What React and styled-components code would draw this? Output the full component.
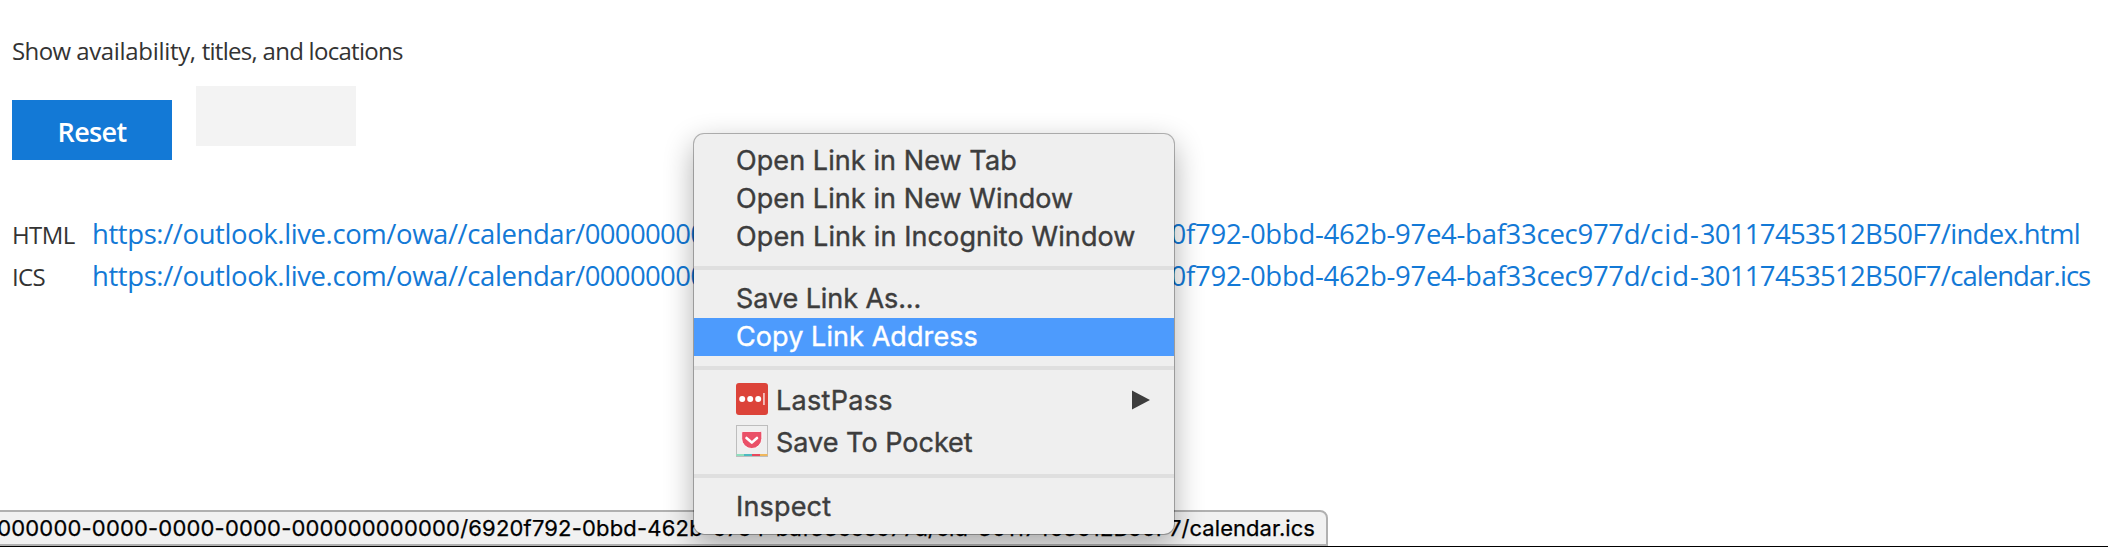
import React from 'react';
import styled, { createGlobalStyle } from 'styled-components';

const GlobalStyle = createGlobalStyle`
  body { margin: 0; background: #fff; overflow: hidden; }
  *, *::before, *::after { box-sizing: border-box; }
`;

const Page = styled.main`
  position: relative;
  width: 2108px;
  height: 547px;
  overflow: hidden;
  padding: 33px 0 0 12px;
  background: #fff;
  border-bottom: 1px solid #000;
  color: #333;
  font-family: 'Open Sans', 'Noto Sans', sans-serif;
`;

const Permission = styled.p`
  margin: 0;
  font-size: 24px;
  line-height: 36px;
  letter-spacing: -0.6px;
`;

const Actions = styled.div`
  display: flex;
  align-items: flex-start;
  gap: 24px;
  margin-top: 17px;
`;

const ResetButton = styled.button`
  width: 160px;
  height: 60px;
  margin: 14px 0 0;
  padding: 3px 0 0;
  border: 0;
  background: #1379d6;
  color: #fff;
  font: 600 27px 'Open Sans', sans-serif;
  letter-spacing: -0.65px;
`;

const EmptyButton = styled.div`
  width: 160px;
  height: 60px;
  background: #f3f3f3;
`;

const Links = styled.div`
  margin-top: 53px;
`;

const LinkRow = styled.div`
  display: flex;
  align-items: baseline;
  height: 42px;
  line-height: 42px;
  white-space: nowrap;
`;

const Format = styled.span`
  width: 80px;
  flex: none;
  font-size: 24px;
  letter-spacing: -0.6px;
`;

const Url = styled.a`
  display: flex;
  color: #1379d6;
  font-size: 27.5px;
  text-decoration: none;
`;

const Part = styled.span`
  letter-spacing: ${(p) => p.$spacing}px;
`;

const StatusBar = styled.div`
  position: absolute;
  left: -2px;
  bottom: 0;
  width: 1330px;
  height: 36px;
  padding-right: 11px;
  display: flex;
  justify-content: flex-end;
  overflow: hidden;
  border: 2px solid #b0b0b0;
  border-top-right-radius: 8px;
  background: #f1f1f1;
  color: #000;
  font: 22px/32px Inter, sans-serif;
  -webkit-text-stroke: 0.25px currentColor;
  white-space: nowrap;
`;

const Menu = styled.div`
  position: absolute;
  left: 694px;
  top: 134px;
  width: 480px;
  height: 400px;
  padding: 8px 0;
  border-radius: 10px;
  background: #efefef;
  box-shadow: 0 0 0 1px rgba(0, 0, 0, 0.28), 0 10px 30px rgba(0, 0, 0, 0.32);
  color: #3d3d3d;
  font-family: Inter, Roboto, sans-serif;
  font-size: 27px;
  letter-spacing: 0.08px;
  -webkit-text-stroke: 0.4px currentColor;
`;

const Item = styled.div`
  display: flex;
  align-items: center;
  height: ${(p) => (p.$tall ? 42 : 38)}px;
  padding: 0 24px 2px 42px;
  background: ${(p) => (p.$active ? '#4d9bfd' : 'transparent')};
  color: ${(p) => (p.$active ? '#fff' : 'inherit')};
  letter-spacing: ${(p) => (p.$spacing === undefined ? 'inherit' : `${p.$spacing}px`)};
  white-space: nowrap;
`;

const Separator = styled.div`
  height: 4px;
  margin: 10px 0;
  background: #dfdfdf;
`;

const Icon = styled.svg`
  flex: none;
  width: 32px;
  height: 32px;
  margin: 0 8px 2px 0;
`;

const Arrow = styled.svg`
  width: 18px;
  height: 20px;
  margin-left: auto;
`;

const LastPassIcon = () => (
  <Icon viewBox="0 0 32 32">
    <rect width="32" height="32" rx="3" fill="#dc4339" />
    <circle cx="6.2" cy="16" r="3" fill="#fff" />
    <circle cx="14.2" cy="16" r="3" fill="#fff" />
    <circle cx="22.2" cy="16" r="3" fill="#fff" />
    <rect x="27.2" y="10" width="1.5" height="12" fill="#fff" opacity="0.8" />
  </Icon>
);

const PocketIcon = () => (
  <Icon viewBox="0 0 32 32">
    <rect x="0.5" y="0.5" width="31" height="31" fill="#efefef" stroke="#bdbdbd" />
    <path d="M7 6.500h17.500a1.300 1.300 0 0 1 1.300 1.300V13.500a10 10 0 0 1-20.100 0V7.800a1.300 1.300 0 0 1 1.300-1.300z" fill="#ea5067" stroke="#fff" strokeWidth="0.8" />
    <path d="M10.500 13l5.300 4.600 5.200-4.600" fill="none" stroke="#fff" strokeWidth="2.600" strokeLinecap="round" strokeLinejoin="round" />
    <path d="M0.500 29h7.500v2H0.500z" fill="#8edfbe" />
    <path d="M8 29h8v2H8z" fill="#4dbac0" />
    <path d="M16 29h8v2h-8z" fill="#e8485c" />
    <path d="M24 29h7.500v2H24z" fill="#f0b75c" />
  </Icon>
);

const CalendarUrl = ({ file, spacing }) => (
  <Url>
    <Part $spacing={-0.41}>https://outlook.live.com/owa//calendar/</Part>
    <Part $spacing={-0.64}>00000000</Part>
    <Part $spacing={-0.15}>-0000-0000-0000-000000000000/692</Part>
    <Part $spacing={-0.28}>0f792-0bbd-462b-97e4-baf33cec977d/</Part>
    <Part $spacing={0.95}>cid-</Part>
    <Part $spacing={-0.69}>30117453512B50F7/</Part>
    <Part $spacing={spacing}>{file}</Part>
  </Url>
);

export default function App() {
  return (
    <Page>
      <GlobalStyle />
      <Permission>
        Show <Part $spacing={-0.32}>availability, </Part>
        <Part $spacing={-0.72}>titles, and locations</Part>
      </Permission>
      <Actions>
        <ResetButton>Reset</ResetButton>
        <EmptyButton />
      </Actions>
      <Links>
        <LinkRow>
          <Format>HTML</Format>
          <CalendarUrl file="index.html" spacing={-0.7} />
        </LinkRow>
        <LinkRow>
          <Format>ICS</Format>
          <CalendarUrl file="calendar.ics" spacing={-0.95} />
        </LinkRow>
      </Links>
      <StatusBar>
        <Part $spacing={0.18}>00000000-0000-0000-0000-000000000000/6920f792-0bbd-462b-97e4-baf33cec977d/cid-30117453512B50F7</Part>
        <Part $spacing={0.05}>/calendar.ics</Part>
      </StatusBar>
      <Menu>
        <Item>Open Link in New Tab</Item>
        <Item>Open Link in New Window</Item>
        <Item $spacing={0.11}>Open Link in Incognito Window</Item>
        <Separator />
        <Item $spacing={-0.08}>Save Link As...</Item>
        <Item $active>Copy Link Address</Item>
        <Separator />
        <Item $tall $spacing={0.3}>
          <LastPassIcon />
          LastPass
          <Arrow viewBox="0 0 18 20">
            <path d="M0 0.500v19L18 10z" fill="#3d3d3d" />
          </Arrow>
        </Item>
        <Item $tall $spacing={0}>
          <PocketIcon />
          Save To Pocket
        </Item>
        <Separator />
        <Item $spacing={0.17}>Inspect</Item>
      </Menu>
    </Page>
  );
}
